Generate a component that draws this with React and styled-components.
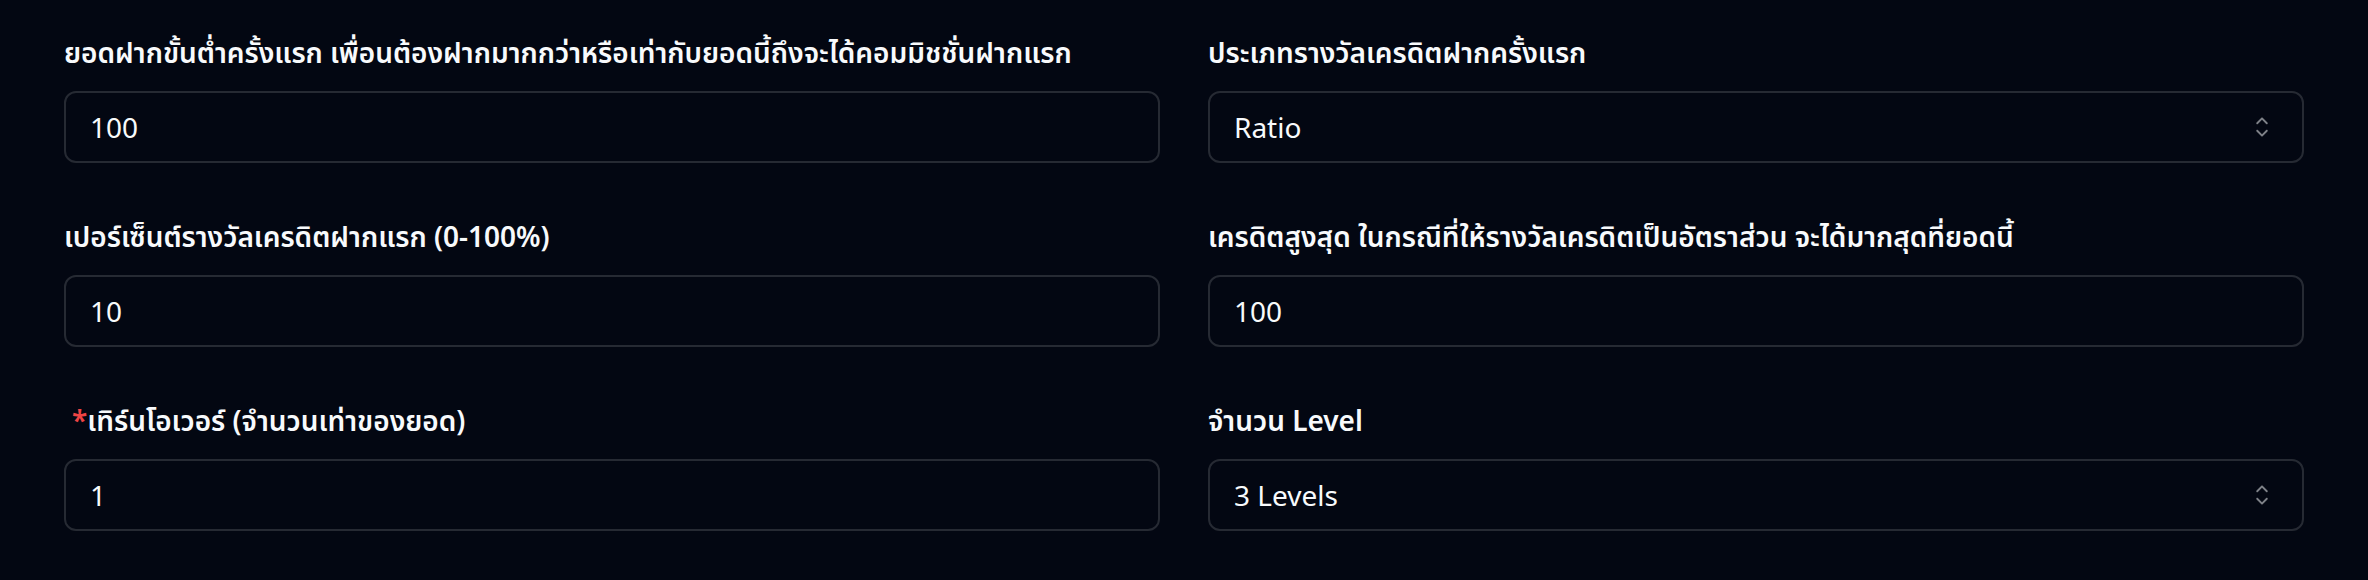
import React from 'react';
import styled, { createGlobalStyle } from 'styled-components';

const GlobalStyle = createGlobalStyle`
  html, body {
    margin: 0;
    padding: 0;
    background: #030712;
  }
  body {
    font-family: "Noto Sans", "Noto Sans Thai", "Noto Sans CJK SC", sans-serif;
    color: #f8fafc;
  }
`;

const Form = styled.div`
  display: grid;
  grid-template-columns: 1fr 1fr;
  column-gap: 48px;
  row-gap: 53px;
  padding: 32px 64px 49px;
  box-sizing: border-box;
  width: 2368px;
`;

const Field = styled.div`
  display: flex;
  flex-direction: column;
  gap: 19px;
`;

const Label = styled.label`
  display: block;
  font-size: 28px;
  line-height: 40px;
  font-weight: 600;
  color: #f8fafc;
  white-space: nowrap;
`;

const Required = styled.span`
  color: #ef4444;
  margin-left: 8px;
`;

const Input = styled.input`
  height: 72px;
  box-sizing: border-box;
  width: 100%;
  padding: 0 24px;
  border: 2px solid #262a33;
  border-radius: 12px;
  background: transparent;
  color: #f8fafc;
  font-family: inherit;
  font-size: 28px;
  outline: none;
`;

const SelectBox = styled.button`
  height: 72px;
  box-sizing: border-box;
  width: 100%;
  padding: 0 24px;
  border: 2px solid #262a33;
  border-radius: 12px;
  background: transparent;
  color: #f8fafc;
  font-family: inherit;
  font-size: 28px;
  display: flex;
  align-items: center;
  justify-content: space-between;
  text-align: left;
  cursor: pointer;
`;

const Caret = styled.svg`
  width: 32px;
  height: 32px;
  opacity: 0.5;
  flex-shrink: 0;
`;

const CaretSort = () => (
  <Caret viewBox="0 0 15 15" fill="none">
    <path
      fill="currentColor"
      fillRule="evenodd"
      clipRule="evenodd"
      d="M4.93179 5.43179C4.75605 5.60753 4.75605 5.89245 4.93179 6.06819C5.10753 6.24392 5.39245 6.24392 5.56819 6.06819L7.49999 4.13638L9.43179 6.06819C9.60753 6.24392 9.89245 6.24392 10.0682 6.06819C10.2439 5.89245 10.2439 5.60753 10.0682 5.43179L7.81819 3.18179C7.73379 3.0974 7.61933 3.04999 7.49999 3.04999C7.38064 3.04999 7.26618 3.0974 7.18179 3.18179L4.93179 5.43179ZM10.0682 9.56819C10.2439 9.39245 10.2439 9.10753 10.0682 8.93179C9.89245 8.75606 9.60753 8.75606 9.43179 8.93179L7.49999 10.8636L5.56819 8.93179C5.39245 8.75606 5.10753 8.75606 4.93179 8.93179C4.75605 9.10753 4.75605 9.39245 4.93179 9.56819L7.18179 11.8182C7.26618 11.9026 7.38064 11.95 7.49999 11.95C7.61933 11.95 7.73379 11.9026 7.81819 11.8182L10.0682 9.56819Z"
    />
  </Caret>
);

const fields = [
  { label: 'ยอดฝากขั้นต่ำครั้งแรก เพื่อนต้องฝากมากกว่าหรือเท่ากับยอดนี้ถึงจะได้คอมมิชชั่นฝากแรก', value: '100' },
  { label: 'ประเภทรางวัลเครดิตฝากครั้งแรก', value: 'Ratio', select: true },
  { label: 'เปอร์เซ็นต์รางวัลเครดิตฝากแรก (0-100%)', value: '10' },
  { label: 'เครดิตสูงสุด ในกรณีที่ให้รางวัลเครดิตเป็นอัตราส่วน จะได้มากสุดที่ยอดนี้', value: '100' },
  { label: 'เทิร์นโอเวอร์ (จำนวนเท่าของยอด)', value: '1', required: true },
  { label: 'จำนวน Level', value: '3 Levels', select: true },
];

export default function App() {
  return (
    <>
      <GlobalStyle />
      <Form>
        {fields.map((f, i) => (
          <Field key={i}>
            <Label>
              {f.required && <Required>*</Required>}
              {f.label}
            </Label>
            {f.select ? (
              <SelectBox type="button">
                <span>{f.value}</span>
                <CaretSort />
              </SelectBox>
            ) : (
              <Input defaultValue={f.value} />
            )}
          </Field>
        ))}
      </Form>
    </>
  );
}
